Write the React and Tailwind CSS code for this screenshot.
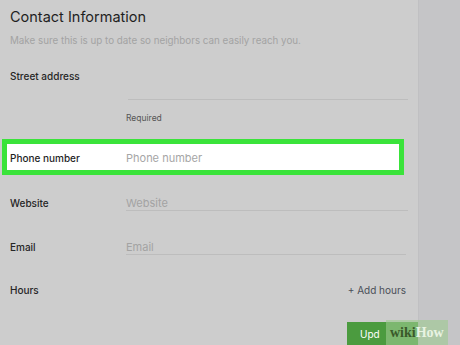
export default function App() {
  const font = { fontFamily: "Inter, 'Helvetica Neue', Arial, sans-serif" };
  return (
    <div className="flex w-[460px] h-[345px] overflow-hidden bg-[#cdcdcd]" style={font}>
      <div className="w-[418px] flex flex-col relative">
        <div className="pl-[10px] pt-[6px] text-[14.5px] leading-[22px] text-[#1f1f1f]">Contact Information</div>
        <div className="pl-[10px] pt-[6px] text-[9.8px] leading-[14px] text-[#a3a3a3]">
          Make sure this is up to date so neighbors can easily reach you.
        </div>
        <div className="pl-[10px] pt-[21px] text-[10px] font-medium leading-[14px] text-[#262626]">Street address</div>
        <div className="ml-[128px] mr-[10px] mt-[16px] border-b border-[#bdbdbd]"></div>
        <div className="ml-[126px] mt-[12px] text-[8.5px] leading-[12px] text-[#555]">Required</div>
        <div className="ml-[2px] mr-[14px] mt-[15px] h-[36px] border-[5px] border-[#3ae33a] bg-white flex items-center pt-[3px]">
          <div className="w-[119px] pl-[3px] text-[10px] font-medium text-[#1f1f1f]">Phone number</div>
          <div className="text-[11px] text-[#a6a6a6]">Phone number</div>
        </div>
        <div className="flex items-end mt-[22px] h-[14px]">
          <div className="w-[126px] pl-[10px] text-[10px] font-medium text-[#262626]">Website</div>
          <div className="flex-1 mr-[10px] border-b border-[#bdbdbd] text-[11px] leading-[14px] text-[#a3a3a3]">Website</div>
        </div>
        <div className="flex items-end mt-[30px] h-[14px]">
          <div className="w-[126px] pl-[10px] text-[10px] font-medium text-[#262626]">Email</div>
          <div className="flex-1 mr-[12px] border-b border-[#bdbdbd] text-[11px] leading-[14px] text-[#a3a3a3]">Email</div>
        </div>
        <div className="flex items-center justify-between mt-[28px] pl-[10px] pr-[12px]">
          <div className="text-[10px] font-medium text-[#262626]">Hours</div>
          <div className="text-[10px] text-[#4a4f58]">+ Add hours</div>
        </div>
        <div className="flex justify-end mt-auto">
          <div className="w-[71px] h-[23px] bg-[#4b9b3f] text-white text-[10px] pl-[13px] pt-[5px]">Upd</div>
        </div>
      </div>
      <div className="flex-1 bg-[#c5c5c7] border-l border-[#c0c0c2]"></div>
      <div className="absolute left-[386px] top-[320px] px-[4px] h-[25px] flex items-center bg-[#9dc98f]/60">
        <span className="text-[14px] font-bold text-[#3a5a2a]" style={{ fontFamily: "'Liberation Serif', serif" }}>wiki</span>
        <span className="text-[14px] font-bold text-[#e8f3e2]" style={{ fontFamily: "'Liberation Serif', serif" }}>How</span>
      </div>
    </div>
  );
}
